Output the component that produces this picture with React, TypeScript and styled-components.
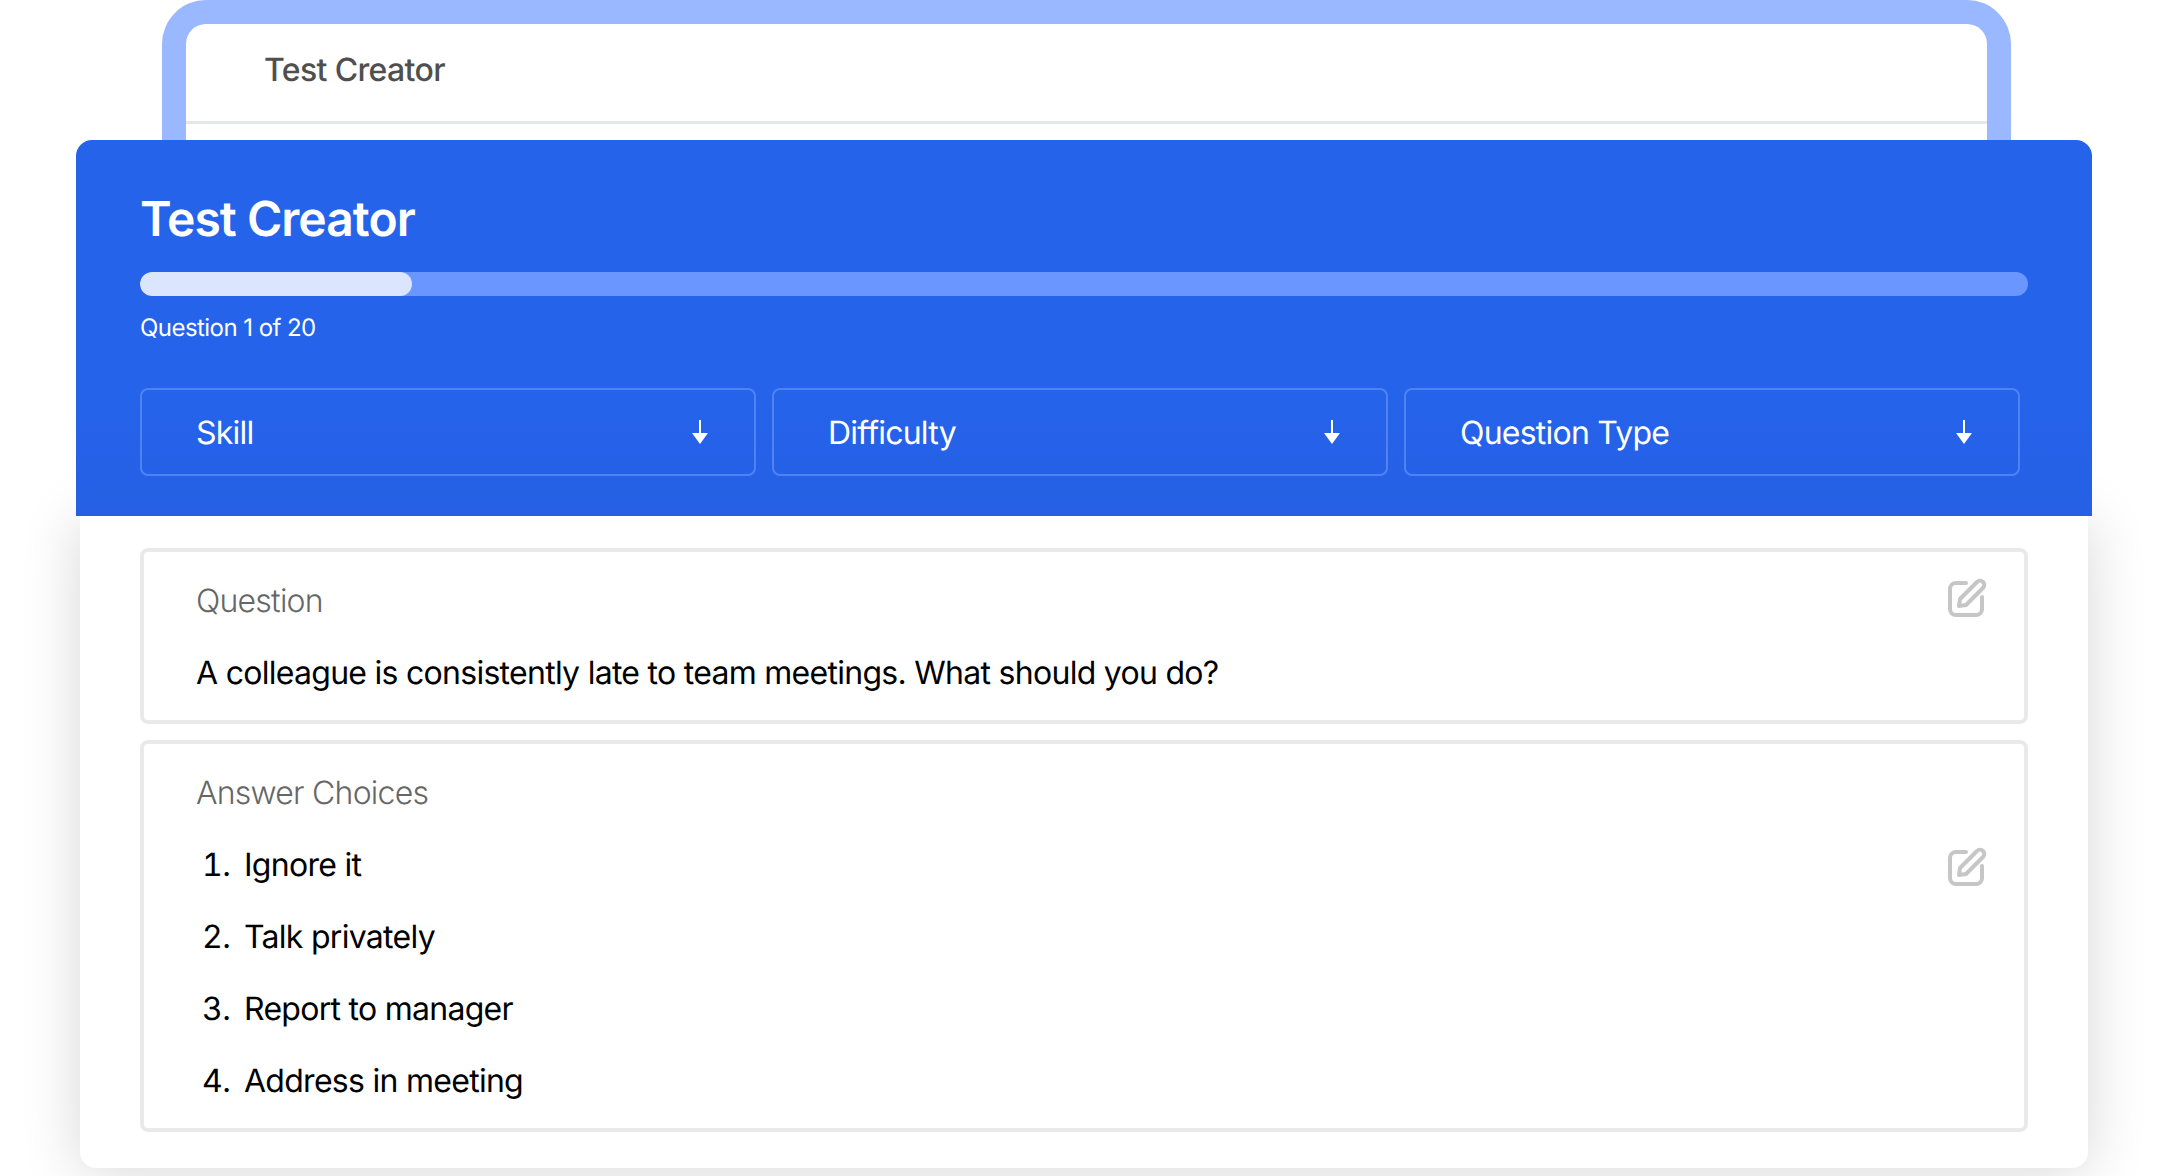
import React from 'react';
import styled, { createGlobalStyle } from 'styled-components';

const GlobalStyle = createGlobalStyle`
    html, body {
        margin: 0;
        height: 100%;
        background: #fff;
    }
    * {
        box-sizing: border-box;
    }
    body {
        font-family: Inter, "Noto Sans", sans-serif;
        text-rendering: geometricPrecision;
        overflow: hidden;
    }
`
const Page = styled.div`
    width: 2168px;
    height: 1176px;
    overflow: hidden;
    display: flex;
    flex-direction: column;
    padding: 0 76px;
`
const BackFrame = styled.div`
    flex: none;
    height: 140px;
    margin: 0 81px 0 86px;
    border: 24px solid #99b8ff;
    border-bottom: none;
    border-radius: 44px 44px 0 0;
    background: #fff;
`
const BackHeader = styled.div`
    height: 100px;
    padding: 0 78px 6px;
    display: flex;
    align-items: center;
    border-bottom: 3px solid #e5e7eb;
    font-size: 32px;
    font-weight: 500;
    letter-spacing: -0.02em;
    color: #4f4f4f;
    border-radius: 20px 20px 0 0;
`
const Panel = styled.div`
    flex: none;
    display: flex;
    flex-direction: column;
    position: relative;
`
const BlueHeader = styled.div`
    position: relative;
    z-index: 1;
    height: 376px;
    background: linear-gradient(180deg, #2563eb 70%, #2560e4 100%);
    border-radius: 16px 16px 0 0;
    padding: 50px 64px 0;
    color: #fff;
`
const Title = styled.h1`
    margin: 0;
    font-size: 48px;
    line-height: 58px;
    font-weight: 600;
    letter-spacing: -0.02em;
`
const Track = styled.div`
    margin-top: 24px;
    width: 1888px;
    height: 24px;
    border-radius: 12px;
    background: #6a97ff;
    overflow: hidden;
`
const Fill = styled.div`
    height: 100%;
    border-radius: 12px;
    background: #dbe6fe;
`
const Progress = styled.div`
    margin-top: 16px;
    font-size: 24px;
    line-height: 32px;
    letter-spacing: -0.023em;
`
const Selects = styled.div`
    margin-top: 44px;
    display: grid;
    grid-template-columns: repeat(3, 616px);
    gap: 16px;
`
const SelectBox = styled.div`
    height: 88px;
    border: 2px solid #4f82f5;
    border-radius: 8px;
    padding: 0 45px 0 54px;
    display: flex;
    align-items: center;
    justify-content: space-between;
    font-size: 32px;
    letter-spacing: -0.024em;
`
const Body = styled.div`
    margin: 0 4px;
    height: 652px;
    background: #fff;
    border-radius: 0 0 16px 16px;
    padding: 32px 60px 0;
    display: flex;
    flex-direction: column;
    gap: 16px;
    box-shadow: 0 4px 60px rgba(0, 0, 0, 0.16);
`
const Card = styled.section`
    position: relative;
    border: 4px solid #e9e9e9;
    border-radius: 8px;
    padding: 13px 52px 11px;
    font-size: 32px;
    line-height: 72px;
    letter-spacing: -0.0225em;
    color: #000;
`
const Label = styled.div`
    color: #666;
    font-weight: 300;
    letter-spacing: -0.024em;
`
const Choices = styled.ol`
    margin: 0;
    padding: 0;
    list-style: none;
    counter-reset: choice;
`
const Choice = styled.li`
    display: flex;
    counter-increment: choice;

    &::before {
        content: counter(choice) ".";
        width: 34px;
        margin-right: 14px;
        text-align: right;
        font-variant-numeric: tabular-nums;
    }
`
const EditButton = styled.svg<{ $top: number }>`
    position: absolute;
    top: ${p => p.$top}px;
    right: 36px;
    width: 40px;
    height: 40px;
    fill: none;
    stroke: #c6c6c6;
    stroke-width: 4;
    stroke-linecap: round;
    stroke-linejoin: round;
`

const ArrowDown = () => (
  <svg width="18" height="26" viewBox="0 0 18 26" fill="none">
    <path d="M9 1V16" stroke="#fff" strokeWidth="2" />
    <path d="M1 14H17L9 25Z" fill="#fff" />
  </svg>
);

const EditIcon = ({ top }: { top: number }) => (
  <EditButton $top={top} viewBox="0 0 40 40">
    <path d="M18 5H8a6 6 0 0 0-6 6V31a6 6 0 0 0 6 6H28a6 6 0 0 0 6-6V19" />
    <path d="M12 21L29 4a4.2 4.2 0 0 1 6 6L18 27L11 28Z" />
  </EditButton>
);

const selects = ['Skill', 'Difficulty', 'Question Type'];
const choices = ['Ignore it', 'Talk privately', 'Report to manager', 'Address in meeting'];

export default function App() {
  return (
    <Page>
      <GlobalStyle />
      <BackFrame>
        <BackHeader>Test Creator</BackHeader>
      </BackFrame>
      <Panel>
        <BlueHeader>
          <Title>Test Creator</Title>
          <Track>
            <Fill style={{ width: `${(272 / 1888) * 100}%` }} />
          </Track>
          <Progress>Question 1 of 20</Progress>
          <Selects>
            {selects.map(name => (
              <SelectBox key={name}>
                {name}
                <ArrowDown />
              </SelectBox>
            ))}
          </Selects>
        </BlueHeader>
        <Body>
          <Card>
            <Label>Question</Label>
            <div>A colleague is consistently late to team meetings. What should you do?</div>
            <EditIcon top={26} />
          </Card>
          <Card>
            <Label>Answer Choices</Label>
            <Choices>
              {choices.map(c => (
                <Choice key={c}>{c}</Choice>
              ))}
            </Choices>
            <EditIcon top={103} />
          </Card>
        </Body>
      </Panel>
    </Page>
  );
}
